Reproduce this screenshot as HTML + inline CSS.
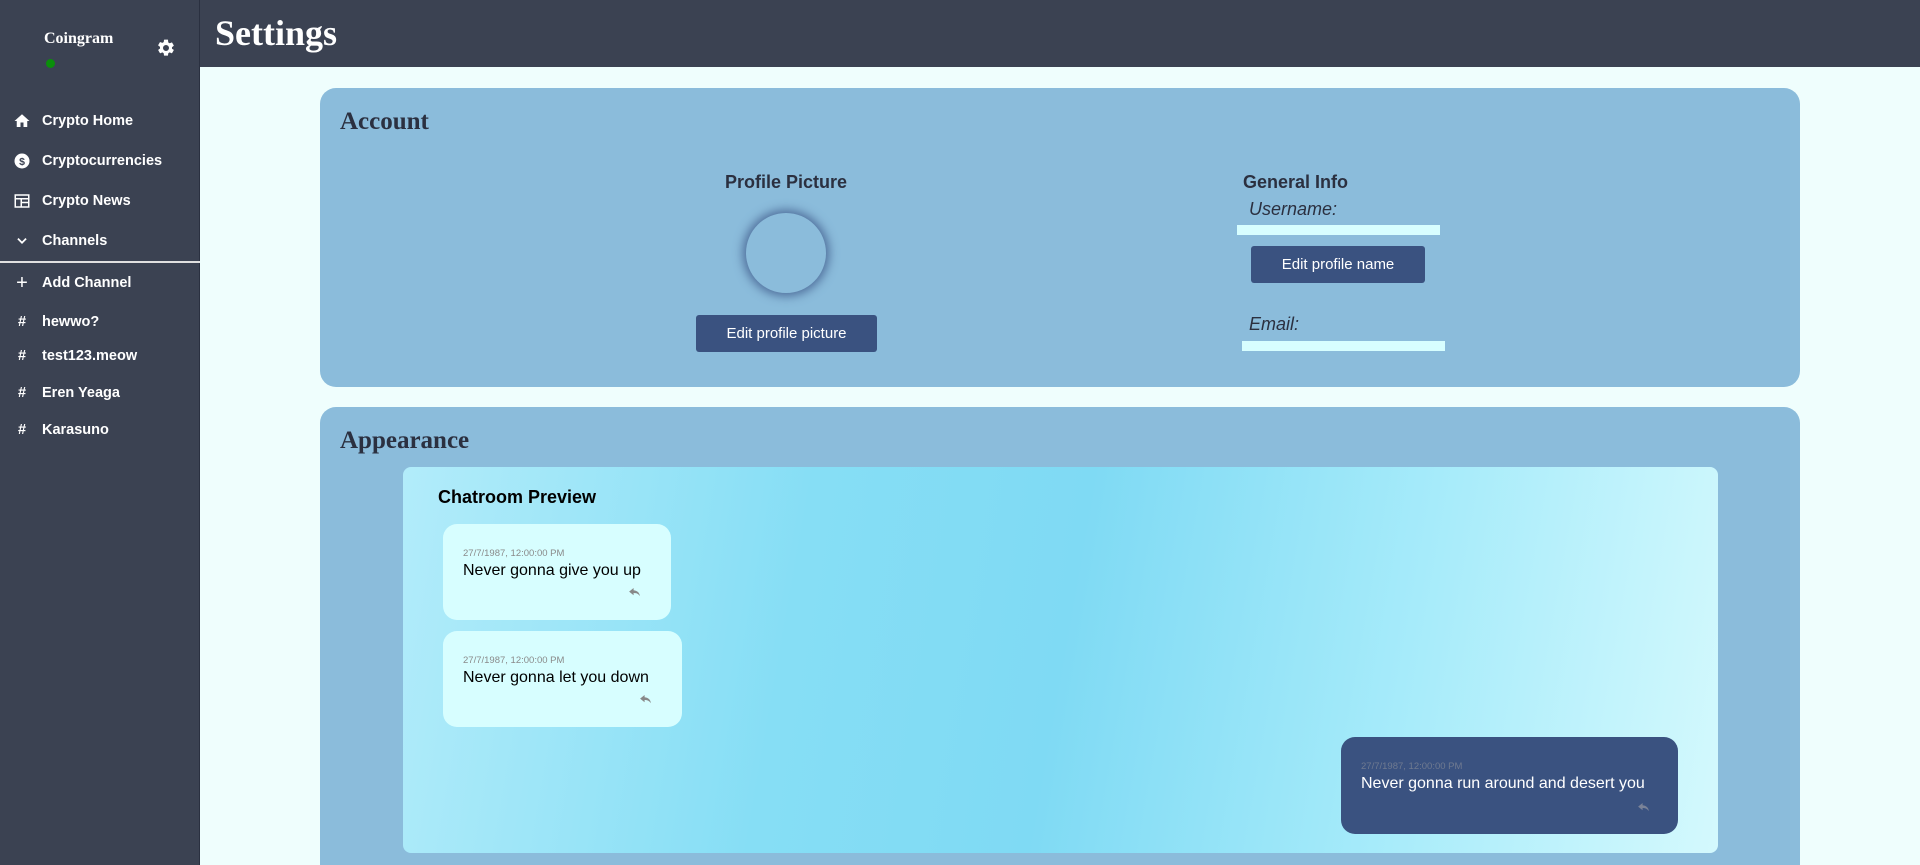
<!DOCTYPE html>
<html style="width:1920px;height:865px;overflow:hidden"><head><meta charset="utf-8"><style>
*{margin:0;padding:0;box-sizing:border-box}
body{width:1920px;height:865px;overflow:hidden;background:#effefd;font-family:"Liberation Sans",sans-serif;position:relative}
.side{position:absolute;left:0;top:0;width:200px;height:865px;background:#3b4252;border-right:1px solid #2a3040}
.hdr{position:absolute;left:200px;top:0;right:0;height:67px;background:#3b4252}
.hdr h1{position:absolute;left:15px;top:12px;font-family:"Liberation Serif",serif;font-weight:bold;font-size:36px;color:#fff}
.abs{position:absolute}
.nav{position:absolute;left:0;color:#fff;font-size:14.5px;font-weight:bold;height:24px;line-height:24px}
.nav .ic{position:absolute;left:13px;width:18px;text-align:center;top:0}
.nav .t{position:absolute;left:42px;white-space:nowrap}
.card{position:absolute;left:320px;width:1480px;background:#8bbcdb;border-radius:16px}
.ttl{position:absolute;left:20px;font-family:"Liberation Serif",serif;font-weight:bold;font-size:25px;color:#2b3040}
.btn{position:absolute;background:#3a5280;color:#fff;font-size:15px;text-align:center;border-radius:3px}
.bub{position:absolute;background:#d7feff;border-radius:14px}
.ts{position:absolute;left:20px;top:24px;font-size:9.5px;color:#8a8a8a}
.msg{position:absolute;left:20px;top:38px;font-size:16px;color:#000;white-space:nowrap}
.rp{position:absolute}
</style></head><body>
<div class="side">
 <div class="abs" style="left:44px;top:30px;color:#fff;font-family:'Liberation Serif',serif;font-weight:bold;font-size:16px">Coingram</div>
 <div class="abs" style="left:46px;top:59px;width:9px;height:9px;border-radius:50%;background:#0a8f0a"></div>
 <svg class="abs" style="left:156px;top:38px" width="20" height="20" viewBox="0 0 24 24"><path fill="#fff" d="M19.14 12.94c.04-.3.06-.61.06-.94s-.02-.64-.07-.94l2.03-1.58a.49.49 0 00.12-.61l-1.920-3.32a.49.49 0 00-.59-.22l-2.39.96a7 7 0 00-1.62-.94l-.36-2.54A.48.48 0 0013.92 2h-3.840a.48.48 0 00-.48.41l-.36 2.54c-.59.24-1.13.57-1.62.94l-2.39-.96a.49.49 0 00-.59.22L2.72 8.47a.47.47 0 00.12.61l2.03 1.58c-.05.3-.07.62-.07.94s.02.64.07.94l-2.03 1.58a.49.49 0 00-.12.61l1.92 3.32c.12.22.37.29.59.22l2.39-.96c.5.38 1.03.7 1.62.94l.36 2.54c.05.24.24.41.48.41h3.84c.24 0 .44-.17.47-.41l.36-2.54c.59-.24 1.13-.56 1.62-.94l2.39.96c.22.08.47 0 .59-.22l1.92-3.32a.47.47 0 00-.12-.61zM12 15.6A3.6 3.6 0 1112 8.4a3.6 3.6 0 010 7.2z"/></svg>
 <div class="nav" style="top:109px"><span class="ic"><svg width="18" height="18" viewBox="0 0 24 24" style="margin-top:3px"><path fill="#fff" d="M10 20v-6h4v6h5v-8h3L12 3 2 12h3v8z"/></svg></span><span class="t">Crypto Home</span></div>
 <div class="nav" style="top:149px"><span class="ic"><svg width="18" height="18" viewBox="0 0 24 24" style="margin-top:3px"><circle cx="12" cy="12" r="10" fill="#fff"/><text x="12" y="17" font-size="14" font-weight="bold" text-anchor="middle" fill="#3b4252" font-family="Liberation Sans">$</text></svg></span><span class="t">Cryptocurrencies</span></div>
 <div class="nav" style="top:189px"><span class="ic"><svg width="18" height="18" viewBox="0 0 24 24" style="margin-top:3px"><path fill="none" stroke="#fff" stroke-width="2" d="M3 4h18v16H3zM3 9h18M11 9v11M11 14h10"/></svg></span><span class="t">Crypto News</span></div>
 <div class="nav" style="top:229px"><span class="ic"><svg width="14" height="14" viewBox="0 0 24 24" style="margin-top:5px"><path fill="none" stroke="#fff" stroke-width="3" d="M5 8l7 7 7-7"/></svg></span><span class="t">Channels</span></div>
 <div class="abs" style="left:0;top:261px;width:200px;height:2px;background:#e0e0e0"></div>
 <div class="nav" style="top:271px"><span class="ic" style="font-size:20px;font-weight:normal">+</span><span class="t">Add Channel</span></div>
 <div class="nav" style="top:310px"><span class="ic">#</span><span class="t">hewwo?</span></div>
 <div class="nav" style="top:344px"><span class="ic">#</span><span class="t">test123.meow</span></div>
 <div class="nav" style="top:381px"><span class="ic">#</span><span class="t">Eren Yeaga</span></div>
 <div class="nav" style="top:418px"><span class="ic">#</span><span class="t">Karasuno</span></div>
</div>
<div class="hdr"><h1>Settings</h1></div>

<div class="card" style="top:88px;height:299px">
 <div class="ttl" style="top:20px">Account</div>
 <div class="abs" style="left:346px;top:84px;width:240px;text-align:center;font-weight:bold;font-size:18px;color:#2b3040">Profile Picture</div>
 <div class="abs" style="left:426px;top:125px;width:80px;height:80px;border-radius:50%;background:#8bbcdb;box-shadow:0 0 10px 3px #4d6c99"></div>
 <div class="btn" style="left:376px;top:227px;width:181px;height:37px;line-height:37px">Edit profile picture</div>
 <div class="abs" style="left:923px;top:84px;font-weight:bold;font-size:18px;color:#2b3040">General Info</div>
 <div class="abs" style="left:929px;top:111px;font-style:italic;font-size:18px;color:#2b3040">Username:</div>
 <div class="abs" style="left:917px;top:137px;width:203px;height:10px;background:#d7feff"></div>
 <div class="btn" style="left:931px;top:158px;width:174px;height:37px;line-height:37px">Edit profile name</div>
 <div class="abs" style="left:929px;top:226px;font-style:italic;font-size:18px;color:#2b3040">Email:</div>
 <div class="abs" style="left:922px;top:253px;width:203px;height:10px;background:#d7feff"></div>
</div>

<div class="card" style="top:407px;height:458px;border-radius:16px 16px 0 0">
 <div class="ttl" style="top:20px">Appearance</div>
 <div class="abs" style="left:83px;top:60px;width:1315px;height:386px;border-radius:8px;background:linear-gradient(100deg,#b2ecfa 0%,#86def5 30%,#7fdaf4 50%,#a6ebfa 75%,#d4f9fd 100%)">
  <div class="abs" style="left:35px;top:20px;font-weight:bold;font-size:18px;color:#000">Chatroom Preview</div>
  <div class="bub" style="left:40px;top:57px;width:228px;height:96px"><div class="ts">27/7/1987, 12:00:00 PM</div><div class="msg">Never gonna give you up</div><svg class="rp" style="left:186px;top:64px" width="11" height="9" viewBox="0 0 12 10"><path fill="#888" d="M5 0L0 4l5 4V5.5c3 0 5 .8 7 3.5-.5-3.5-2.5-6-7-6.5z"/></svg></div>
  <div class="bub" style="left:40px;top:164px;width:239px;height:96px"><div class="ts">27/7/1987, 12:00:00 PM</div><div class="msg">Never gonna let you down</div><svg class="rp" style="left:197px;top:64px" width="11" height="9" viewBox="0 0 12 10"><path fill="#888" d="M5 0L0 4l5 4V5.5c3 0 5 .8 7 3.5-.5-3.5-2.5-6-7-6.5z"/></svg></div>
  <div class="bub" style="left:938px;top:270px;width:337px;height:97px;background:#3a5280"><div class="ts" style="color:#6f7a90">27/7/1987, 12:00:00 PM</div><div class="msg" style="color:#fff">Never gonna run around and desert you</div><svg class="rp" style="left:297px;top:66px" width="11" height="9" viewBox="0 0 12 10"><path fill="#7a8398" d="M5 0L0 4l5 4V5.5c3 0 5 .8 7 3.5-.5-3.5-2.5-6-7-6.5z"/></svg></div>
 </div>
</div>
</body></html>
